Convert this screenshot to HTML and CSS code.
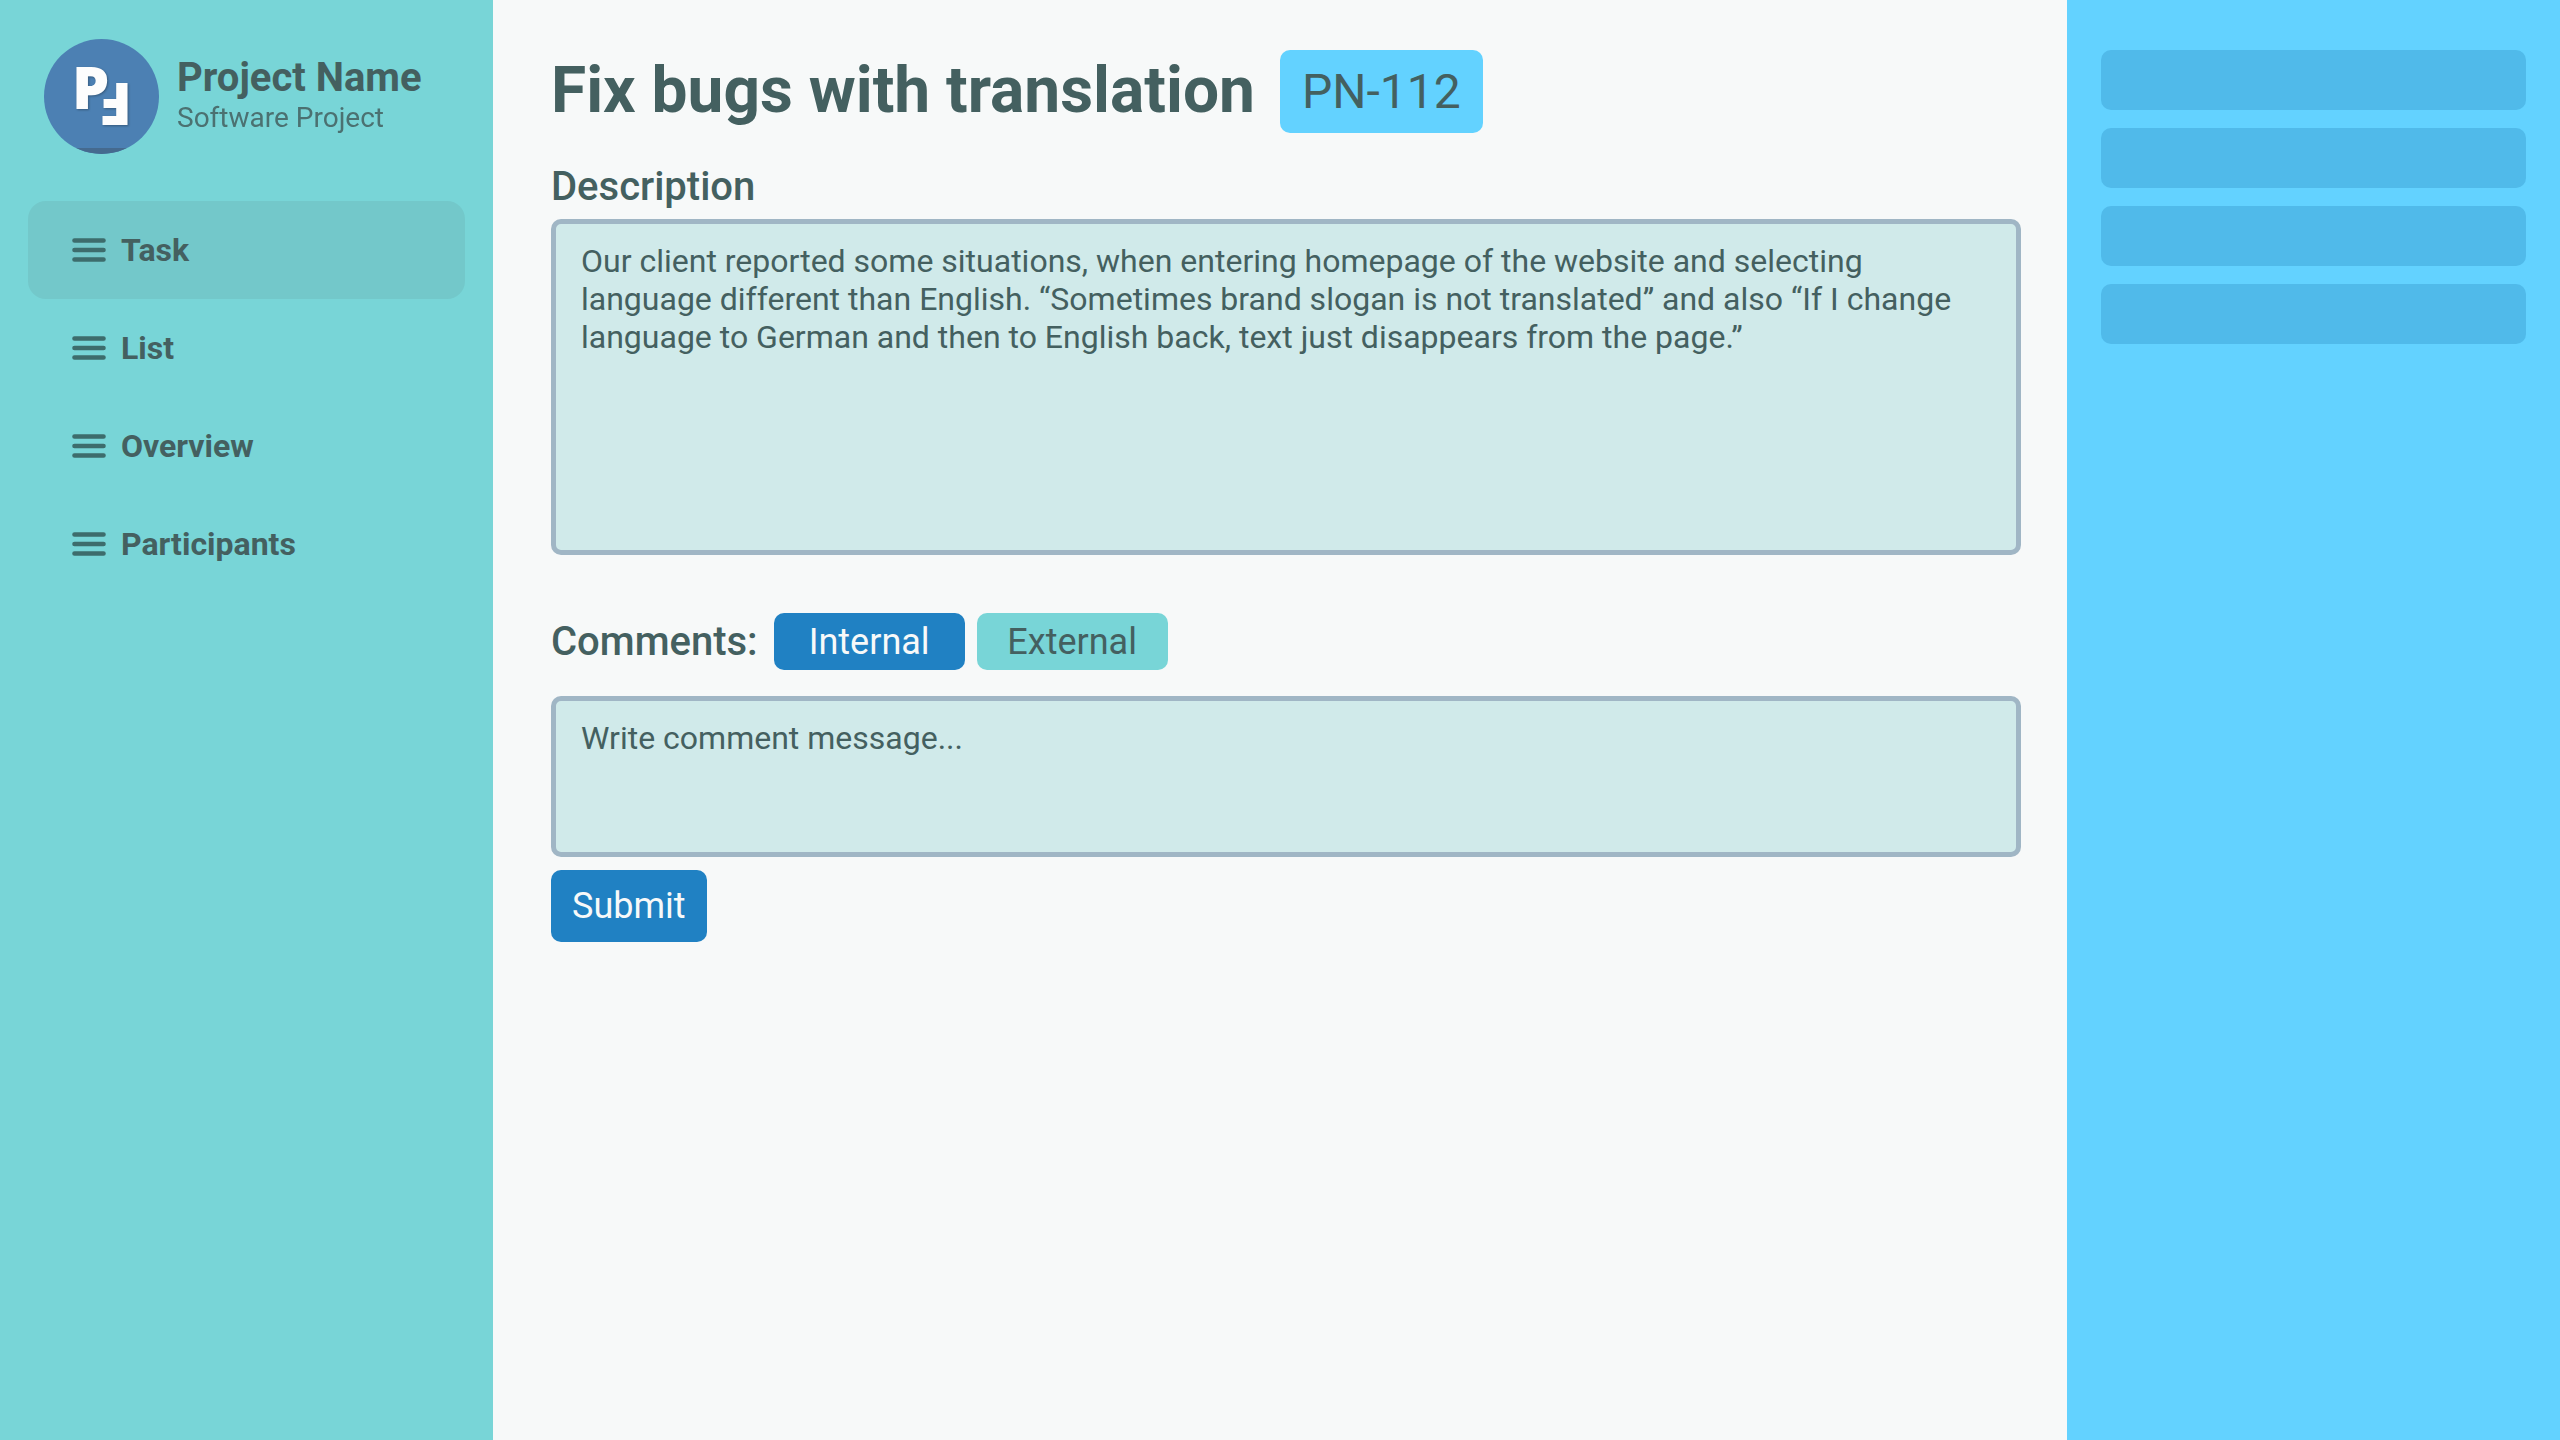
FILE: index.html
```html
<!DOCTYPE html>
<html lang="en">
<head>
  <meta charset="utf-8">
  <meta name="viewport" content="width=device-width, initial-scale=1">
  <title>Fix bugs with translation – PN-112</title>
  <link rel="stylesheet" href="styles.css">
</head>
<body>
  <svg class="sprite" aria-hidden="true">
    <symbol id="menu-icon" viewBox="0 0 34 24">
      <path d="M2.5 2.5h29M2.5 12h29M2.5 21.5h29" fill="none" stroke="currentColor" stroke-width="4.6" stroke-linecap="round"/>
    </symbol>
  </svg>
  <div class="layout">
    <aside class="sidebar">
      <div class="brand">
        <svg class="brand-logo" viewBox="0 0 115 115" role="img" aria-label="Project logo">
          <clipPath id="logo-clip"><circle cx="57.5" cy="57.5" r="57.5"/></clipPath>
          <g clip-path="url(#logo-clip)">
            <rect class="logo-disc" width="115" height="115"/>
            <rect class="logo-strip" y="109" width="115" height="6"/>
          </g>
          <g class="logo-letters">
            <text x="28" y="70">P</text>
            <text transform="translate(88 44) rotate(180)">F</text>
          </g>
        </svg>
        <div class="brand-text">
          <div class="brand-name">Project Name</div>
          <div class="brand-type">Software Project</div>
        </div>
      </div>
      <nav class="nav">
        <a class="nav-link nav-link-active" href="#task" aria-current="page"><svg class="nav-icon" aria-hidden="true"><use href="#menu-icon"/></svg>Task</a>
        <a class="nav-link" href="#list"><svg class="nav-icon" aria-hidden="true"><use href="#menu-icon"/></svg>List</a>
        <a class="nav-link" href="#overview"><svg class="nav-icon" aria-hidden="true"><use href="#menu-icon"/></svg>Overview</a>
        <a class="nav-link" href="#participants"><svg class="nav-icon" aria-hidden="true"><use href="#menu-icon"/></svg>Participants</a>
      </nav>
    </aside>

    <main class="task">
      <header class="task-header">
        <h1 class="task-title">Fix bugs with translation</h1>
        <span class="task-key">PN-112</span>
      </header>

      <label class="section-label" for="description">Description</label>
      <textarea class="text-box description" id="description">Our client reported some situations, when entering homepage of the website and selecting language different than English. “Sometimes brand slogan is not translated” and also “If I change language to German and then to English back, text just disappears from the page.”</textarea>

      <form class="comments">
        <div class="comments-header">
          <label class="section-label" for="comment">Comments:</label>
          <div class="tabs">
            <button class="button tab tab-active" type="button" aria-pressed="true">Internal</button>
            <button class="button tab" type="button" aria-pressed="false">External</button>
          </div>
        </div>
        <textarea class="text-box comment" id="comment" placeholder="Write comment message..."></textarea>
        <button class="button submit" type="submit">Submit</button>
      </form>
    </main>

    <aside class="details">
      <div class="detail"></div>
      <div class="detail"></div>
      <div class="detail"></div>
      <div class="detail"></div>
    </aside>
  </div>
</body>
</html>
```
FILE: styles.css
```css
:root {
  --text: #446060;
  --teal: #78d5d7;
  --sky: #63d2ff;
  --blue: #2081c3;
  --surface: #f7f9f9;
  --radius: 10px;
}

* {
  box-sizing: border-box;
}

body {
  margin: 0;
  background: var(--surface);
  color: var(--text);
  font-family: Roboto, "Liberation Sans", sans-serif;
  font-size: 32px;
  line-height: 38px;
}

.sprite {
  display: none;
}

.layout {
  display: grid;
  grid-template-columns: 493px minmax(0, 1fr) 493px;
  min-height: 100vh;
}

/* Sidebar */

.sidebar {
  padding: 39px 28px;
  background: var(--teal);
}

.brand {
  display: flex;
  gap: 18px;
  padding: 0 16px;
  margin-bottom: 47px;
}

.brand-logo {
  flex: none;
  width: 115px;
  height: 115px;
}

.logo-disc {
  fill: #4c80b3;
}

.logo-strip {
  fill: #456a8f;
}

.logo-letters {
  fill: #fdfdfd;
  font-family: "Open Sans", sans-serif;
  font-size: 59px;
  font-weight: 800;
  filter: drop-shadow(1px 1px 1px rgba(0, 0, 0, 0.3));
}

.brand-text {
  padding-top: 15px;
}

.brand-name {
  font-size: 40px;
  font-weight: 700;
  line-height: 48px;
}

.brand-type {
  font-size: 28px;
  line-height: 32px;
  opacity: 0.85;
}

.nav-link {
  display: flex;
  align-items: center;
  gap: 15px;
  height: 98px;
  padding: 0 44px;
  border-radius: 18px;
  color: inherit;
  font-weight: 700;
  text-decoration: none;
}

.nav-link-active {
  background: #73c8ca;
}

.nav-icon {
  width: 34px;
  height: 24px;
  color: #3d6c6c;
}

/* Task */

.task {
  padding: 50px 46px 50px 58px;
}

.task-header {
  display: flex;
  align-items: flex-start;
  gap: 25px;
  margin-bottom: 30px;
}

.task-title {
  margin: 0;
  font-size: 64px;
  font-weight: 700;
  line-height: 82px;
}

.task-key {
  padding: 0 22px;
  border-radius: var(--radius);
  background: var(--sky);
  font-size: 48px;
  line-height: 83px;
}

.section-label {
  display: block;
  font-size: 40px;
  font-weight: 500;
  line-height: 48px;
}

.text-box {
  display: block;
  width: 100%;
  padding: 18px 32px 18px 25px;
  border: 5px solid #a0b6c5;
  border-radius: var(--radius);
  background: #d0eaea;
  color: inherit;
  font: inherit;
  resize: none;
}

.text-box::placeholder {
  color: inherit;
  opacity: 1;
}

.description {
  height: 336px;
  margin-top: 8px;
}

.comments {
  margin-top: 58px;
}

.comments-header {
  display: flex;
  align-items: center;
  gap: 16px;
  margin-bottom: 26px;
}

.tabs {
  display: flex;
  gap: 12px;
}

.button {
  border: 0;
  border-radius: var(--radius);
  background: var(--blue);
  color: var(--surface);
  font-family: inherit;
  font-size: 36px;
}

.tab {
  width: 191px;
  height: 57px;
  padding: 0;
  background: var(--teal);
  color: var(--text);
}

.tab-active {
  background: var(--blue);
  color: var(--surface);
}

.comment {
  height: 161px;
}

.submit {
  height: 72px;
  margin-top: 13px;
  padding: 0 21px;
}

/* Details */

.details {
  display: flex;
  flex-direction: column;
  gap: 18px;
  padding: 50px 34px;
  background: var(--sky);
}

.detail {
  height: 60px;
  border-radius: var(--radius);
  background: #50baea;
}
```
